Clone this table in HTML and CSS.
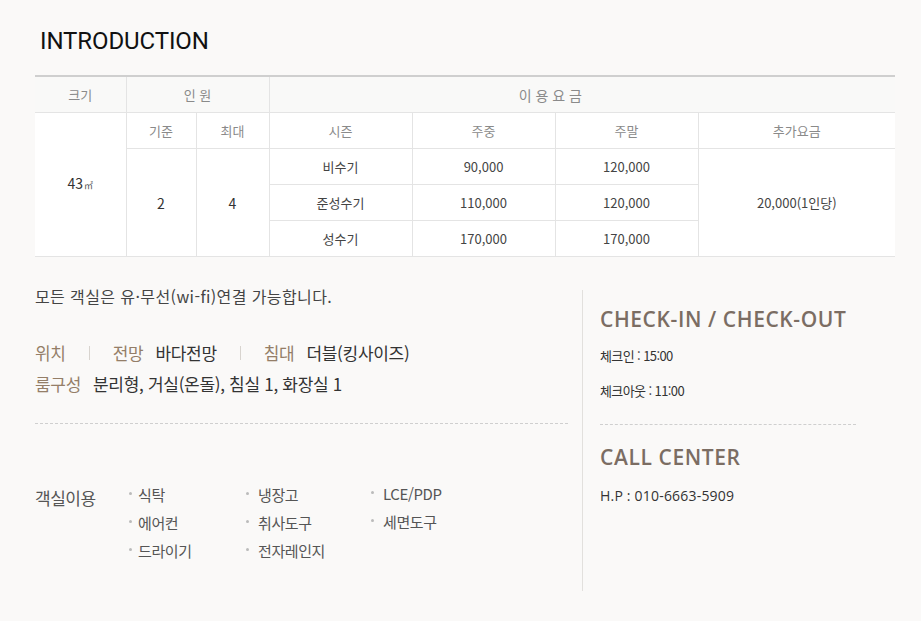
FILE: index.html
```html
<!DOCTYPE html>
<html lang="ko">
<head>
<meta charset="utf-8">
<title>Introduction</title>
<link rel="stylesheet" href="styles.css">
</head>
<body>
<div class="page">
  <h1 class="title">INTRODUCTION</h1>

  <table class="rate">
    <colgroup>
      <col class="c1"><col class="c2"><col class="c3"><col class="c4"><col class="c5"><col class="c6"><col class="c7">
    </colgroup>
    <tr class="head1">
      <th>크기</th>
      <th colspan="2">인 원</th>
      <th colspan="4" class="fee">이 용 요 금</th>
    </tr>
    <tr class="head2">
      <td rowspan="4" class="val">43<span class="unit">㎡</span></td>
      <th>기준</th>
      <th>최대</th>
      <th>시즌</th>
      <th>주중</th>
      <th>주말</th>
      <th>추가요금</th>
    </tr>
    <tr>
      <td rowspan="3" class="val">2</td>
      <td rowspan="3" class="val">4</td>
      <td>비수기</td>
      <td>90,000</td>
      <td>120,000</td>
      <td rowspan="3">20,000(1인당)</td>
    </tr>
    <tr>
      <td>준성수기</td>
      <td>110,000</td>
      <td>120,000</td>
    </tr>
    <tr>
      <td>성수기</td>
      <td>170,000</td>
      <td>170,000</td>
    </tr>
  </table>

  <div class="info">
    <div class="left">
      <p class="notice">모든 객실은 유·무선(wi-fi)연결 가능합니다.</p>
      <div class="specs">
        <div class="spec-row">
          <span class="lbl">위치</span>
          <span class="sep"></span>
          <span class="lbl">전망</span><span class="v">바다전망</span>
          <span class="sep"></span>
          <span class="lbl">침대</span><span class="v">더블(킹사이즈)</span>
        </div>
        <div class="spec-row">
          <span class="lbl">룸구성</span><span class="v">분리형, 거실(온돌), 침실 1, 화장실 1</span>
        </div>
      </div>
      <div class="dash"></div>
      <div class="amen">
        <div class="amen-lbl">객실이용</div>
        <ul class="amen-col col-a">
          <li>식탁</li><li>에어컨</li><li>드라이기</li>
        </ul>
        <ul class="amen-col col-b">
          <li>냉장고</li><li>취사도구</li><li>전자레인지</li>
        </ul>
        <ul class="amen-col col-c">
          <li>LCE/PDP</li><li>세면도구</li>
        </ul>
      </div>
    </div>
    <div class="right">
      <h2 class="rh">CHECK-IN / CHECK-OUT</h2>
      <p class="rt first">체크인 : 15:00</p>
      <p class="rt">체크아웃 : 11:00</p>
      <div class="dash rdash"></div>
      <h2 class="rh">CALL CENTER</h2>
      <p class="rt first hp">H.P : 010-6663-5909</p>
    </div>
  </div>
</div>
</body>
</html>
```

FILE: styles.css
```css
html, body {
  margin: 0;
  padding: 0;
  background: #faf9f8;
}
body {
  font-family: "Noto Sans CJK KR", "Noto Sans", sans-serif;
  color: #333;
}
.page {
  padding: 27px 0 0 35px;
  width: 860px;
}
.title {
  font-family: Roboto, "Noto Sans", sans-serif;
  font-weight: 400;
  font-size: 24px;
  line-height: 28px;
  margin: 0 0 20px 5px;
  color: #111;
  letter-spacing: -0.1px;
}
.rate {
  width: 860px;
  border-collapse: collapse;
  table-layout: fixed;
  border-top: 2px solid #cfcfcf;
  border-bottom: 1px solid #d6d6d6;
  font-size: 13px;
}
.c1 { width: 91px; }
.c2 { width: 70px; }
.c3 { width: 73px; }
.c4 { width: 143px; }
.c5 { width: 143px; }
.c6 { width: 143px; }
.c7 { width: 197px; }
.rate th, .rate td {
  height: 35px;
  padding: 0;
  text-align: center;
  vertical-align: middle;
  border: 1px solid #e4e4e4;
  font-weight: 400;
  line-height: 20px;
}
.rate tr > :first-child { border-left: none; }
.rate tr > :last-child { border-right: none; }
.rate th { color: #8a8a8a; }
.rate td { color: #444; background: #fff; }
.rate .head1 th { background: #f9f9f8; border-top: none; }
.rate .head1 th.fee { padding-right: 64px; font-size: 14px; }
.rate .head2 th { background: #fff; }
.rate td.val { font-size: 14px; color: #333; }
.unit { font-size: 9px; color: #555; margin-left: 1px; }

.info {
  display: flex;
  margin-top: 29px;
}
.left {
  width: 533px;
  margin-right: 14px;
}
.notice {
  margin: 0;
  font-size: 16px;
  line-height: 20px;
  color: #444;
  letter-spacing: 0.4px;
}
.specs {
  margin-top: 31px;
}
.spec-row {
  display: flex;
  align-items: center;
  font-size: 17px;
  line-height: 24px;
  height: 31px;
  letter-spacing: -0.3px;
}
.lbl { color: #947e68; }
.v { color: #333; margin-left: 12px; }
.sep {
  display: inline-block;
  width: 1px;
  height: 14px;
  background: #d8d4cf;
  margin: 0 23px;
}
.dash {
  border-top: 1px dashed #cfcfcf;
  margin-top: 24px;
}
.amen {
  display: flex;
  margin-top: 62px;
  font-size: 15px;
}
.amen-lbl {
  width: 93px;
  font-size: 17px;
  line-height: 24px;
  color: #555;
  letter-spacing: -0.5px;
}
.amen-col {
  list-style: none;
  margin: -2px 0 0;
  padding: 0;
  color: #555;
}
.amen-col li {
  position: relative;
  height: 28px;
  line-height: 22px;
  padding-left: 10px;
  letter-spacing: -0.4px;
}
.amen-col li::before {
  content: "";
  position: absolute;
  left: 1px;
  top: 8px;
  width: 3px;
  height: 3px;
  border-radius: 50%;
  background: #bbb;
}
.col-a { width: 117px; }
.col-b { width: 125px; }
.col-b li { padding-left: 13px; }
.col-c { margin-top: -3px; }
.col-c li { padding-left: 13px; }

.right {
  box-sizing: border-box;
  border-left: 1px solid #e2e0dd;
  padding: 15px 0 0 17px;
  width: 274px;
  height: 301px;
  margin-top: 4px;
}
.rh {
  margin: 0;
  font-family: "Open Sans", "Noto Sans", sans-serif;
  font-weight: 600;
  font-size: 21px;
  line-height: 28px;
  color: #7b6d63;
  letter-spacing: 0.6px;
}
.rt {
  margin: 0;
  font-size: 13px;
  line-height: 20px;
  color: #333;
  margin-top: 15px;
  letter-spacing: -0.6px;
}
.rt.first { margin-top: 13px; }
.rt.hp {
  font-family: "Open Sans", "Noto Sans", sans-serif;
  font-size: 14px;
  letter-spacing: 0.2px;
  margin-top: 15px;
}
.rdash {
  margin-top: 23px;
  margin-bottom: 18px;
}
```
